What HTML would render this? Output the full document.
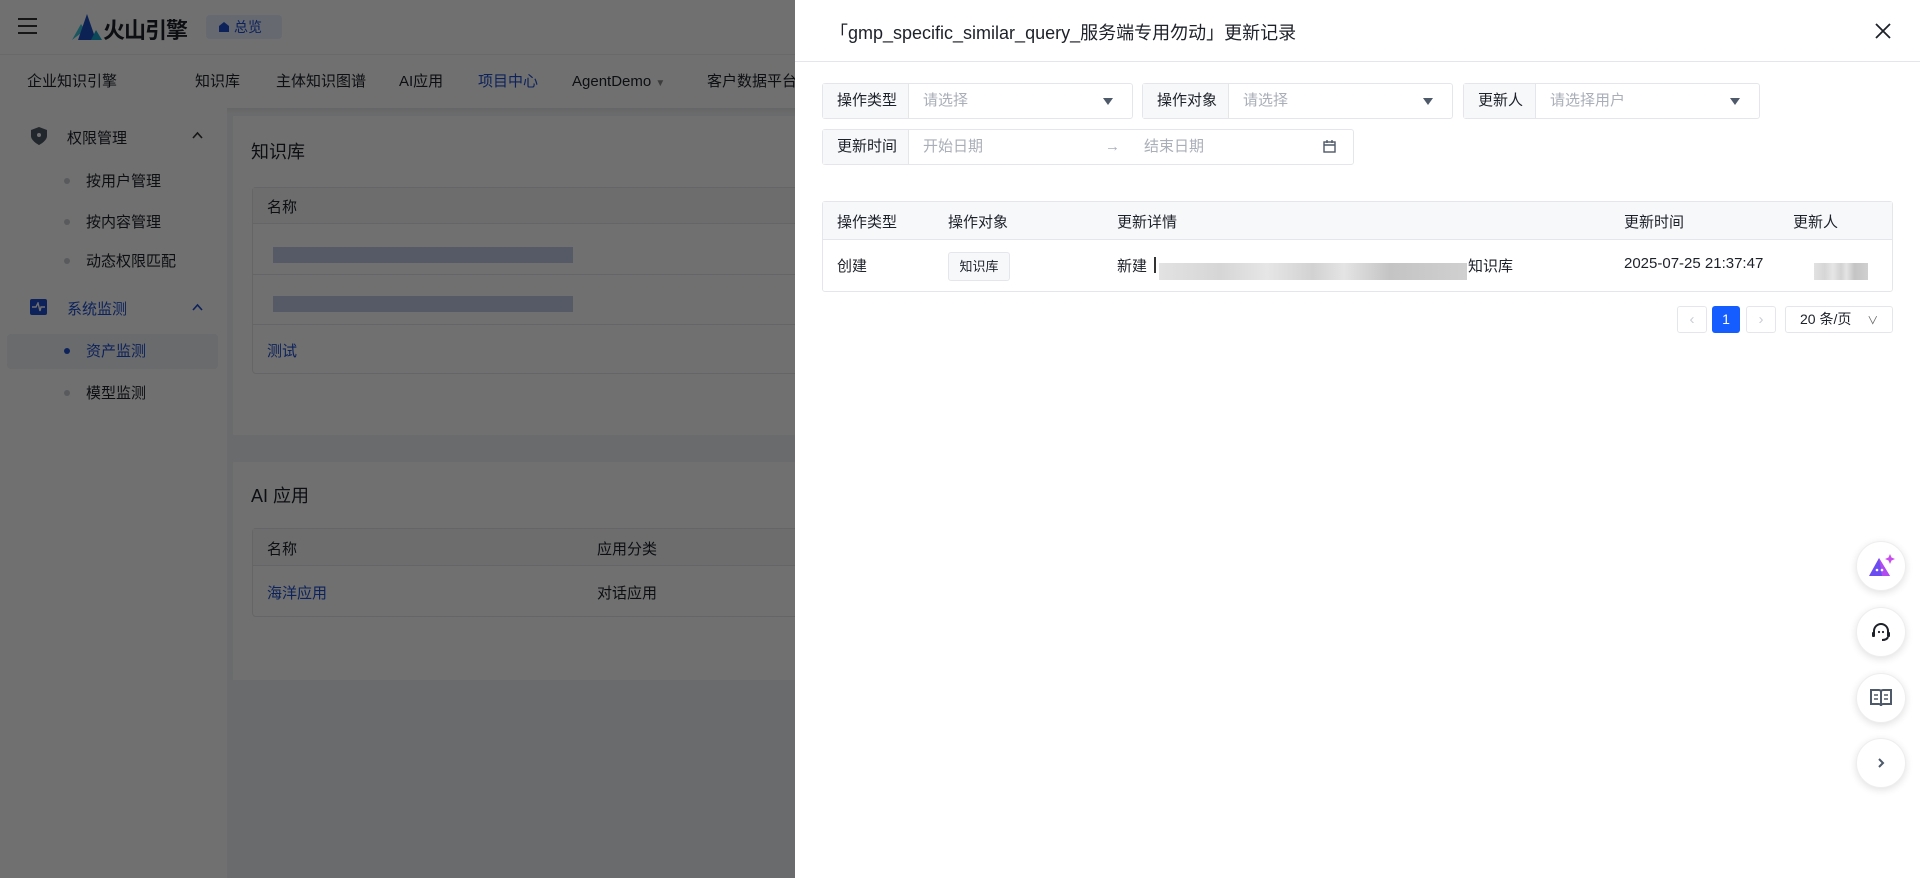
<!DOCTYPE html>
<html><head><meta charset="utf-8"><style>
*{margin:0;padding:0;box-sizing:border-box}
body{width:1920px;height:878px;overflow:hidden;font-family:"Liberation Sans","Noto Sans CJK SC",sans-serif;font-size:15px;color:#1d2129;position:relative;background:#f2f3f5}
.abs{position:absolute}
.top{left:0;top:0;width:1920px;height:54px;background:#fff}
.nav{left:0;top:54px;width:1920px;height:54px;background:#fff;border-top:1px solid #eee;box-shadow:0 2px 4px rgba(0,0,0,.06)}
.nav span{position:absolute;top:17px;font-size:15px;color:#1d2129;line-height:20px}
.side{left:0;top:108px;width:227px;height:770px;background:#fff}
.side div{position:absolute;font-size:15px}
.dot{width:6px;height:6px;border-radius:3px;background:#c9cdd4}
.card{background:#fff;position:absolute}
.tbl{position:absolute;border:1px solid #e5e6eb;border-radius:4px}
.mask{left:0;top:0;width:1920px;height:878px;background:rgba(0,0,0,.56)}
.drawer{left:795px;top:0;width:1125px;height:878px;background:#fff}
.sel{position:absolute;height:36px;border:1px solid #e5e6eb;border-radius:3px;background:#fff;font-size:15px}
.sel .lb{position:absolute;left:0;top:0;height:34px;background:#f7f8fa;border-right:1px solid #e5e6eb;line-height:34px;padding-left:14px;color:#1d2129}
.sel .ph{position:absolute;top:0;line-height:34px;color:#a9aeb8}
.sel .ar{position:absolute;top:14px;width:0;height:0;border-left:5px solid transparent;border-right:5px solid transparent;border-top:7px solid #4e5969}
.fb{position:absolute;width:50px;height:50px;border-radius:25px;background:#fff;box-shadow:0 2px 8px rgba(0,0,0,.12);border:1px solid #eee;display:flex;align-items:center;justify-content:center}
.blur{position:absolute;background:linear-gradient(90deg,#e2e2e2,#d6d6d6 20%,#e6e6e6 35%,#d2d2d2 50%,#e4e4e4 60%,#c4c4c4 75%,#d0d0d0 100%)}
</style></head><body>
<div class="abs top">
 <div class="abs" style="left:18px;top:18px;width:19px;height:2px;background:#333;box-shadow:0 7px 0 #333,0 14px 0 #333"></div>
 <svg class="abs" style="left:72px;top:14px" width="30" height="26" viewBox="0 0 30 26"><path d="M0 26 L9 10 L13 16 Z" fill="#3bc3d8"/><path d="M6 26 L15 0 L24 26 Z" fill="#1e4fc0"/><path d="M19 26 L24 16 L30 26Z" fill="#17a3c8"/></svg>
 <div class="abs" style="left:103px;top:13px;font-size:22px;font-weight:bold;color:#1d2129;letter-spacing:-1px">火山引擎</div>
 <div class="abs" style="left:206px;top:15px;width:76px;height:24px;background:#e8effe;border-radius:4px;color:#1e4fd0;font-size:14px;line-height:24px;padding-left:28px">总览</div>
 <svg class="abs" style="left:218px;top:21px" width="12" height="12" viewBox="0 0 12 12"><path d="M1 5 L6 1 L11 5 V11 H1Z" fill="#1e4fd0"/></svg>
</div>
<div class="abs nav">
 <span style="left:27px">企业知识引擎</span><span style="left:195px">知识库</span><span style="left:276px">主体知识图谱</span><span style="left:399px">AI应用</span><span style="left:478px;color:#1e4fd0">项目中心</span><span style="left:572px">AgentDemo <small style="font-size:10px;color:#888">▼</small></span><span style="left:707px">客户数据平台</span>
</div>
<div class="abs side">
 <svg style="position:absolute;left:31px;top:19px" width="16" height="18" viewBox="0 0 16 18"><path d="M8 0 L16 3 V9 C16 14 8 18 8 18 C8 18 0 14 0 9 V3Z" fill="#4e5969"/><circle cx="8" cy="8" r="2" fill="#fff"/></svg>
 <div style="left:67px;top:19px">权限管理</div>
 <svg style="position:absolute;left:192px;top:23px" width="11" height="8" viewBox="0 0 11 8"><path d="M1 7 L5.5 2 L10 7" fill="none" stroke="#333" stroke-width="1.6"/></svg>
 <div class="dot" style="left:64px;top:70px"></div><div style="left:86px;top:62px">按用户管理</div>
 <div class="dot" style="left:64px;top:111px"></div><div style="left:86px;top:103px">按内容管理</div>
 <div class="dot" style="left:64px;top:150px"></div><div style="left:86px;top:142px">动态权限匹配</div>
 <div style="left:30px;top:191px;width:17px;height:16px;background:#1e4fd0;border-radius:2px"></div>
 <svg style="position:absolute;left:32px;top:194px" width="13" height="10" viewBox="0 0 13 10"><path d="M0 5 H4 L6 1 L8 9 L9 5 H13" fill="none" stroke="#fff" stroke-width="1.4"/></svg>
 <div style="left:67px;top:190px;color:#1e4fd0">系统监测</div>
 <svg style="position:absolute;left:192px;top:195px" width="11" height="8" viewBox="0 0 11 8"><path d="M1 7 L5.5 2 L10 7" fill="none" stroke="#1e4fd0" stroke-width="1.6"/></svg>
 <div style="left:7px;top:226px;width:211px;height:35px;background:#f2f3f5;border-radius:4px"></div>
 <div class="dot" style="left:64px;top:240px;background:#1e4fd0"></div><div style="left:86px;top:232px;color:#1e4fd0">资产监测</div>
 <div class="dot" style="left:64px;top:282px"></div><div style="left:86px;top:274px">模型监测</div>
</div>
<div class="card" style="left:233px;top:116px;width:600px;height:319px">
 <div class="abs" style="left:18px;top:22px;font-size:18px">知识库</div>
 <div class="tbl" style="left:19px;top:71px;width:600px;height:187px">
  <div class="abs" style="left:0;top:0;width:600px;height:36px;background:#f7f8fa;border-bottom:1px solid #e5e6eb"></div>
  <div class="abs" style="left:14px;top:8px">名称</div>
  <div class="abs" style="left:0;top:86px;width:600px;border-top:1px solid #e5e6eb"></div>
  <div class="abs" style="left:0;top:136px;width:600px;border-top:1px solid #e5e6eb"></div>
  <div class="abs" style="left:20px;top:59px;width:300px;height:16px;background:#c5cde8"></div>
  <div class="abs" style="left:20px;top:108px;width:300px;height:16px;background:#c5cde8"></div>
  <div class="abs" style="left:14px;top:152px;color:#1e4fd0">测试</div>
 </div>
</div>
<div class="card" style="left:233px;top:462px;width:600px;height:218px">
 <div class="abs" style="left:18px;top:20px;font-size:18px">AI 应用</div>
 <div class="tbl" style="left:19px;top:66px;width:600px;height:89px">
  <div class="abs" style="left:0;top:0;width:600px;height:37px;background:#f7f8fa;border-bottom:1px solid #e5e6eb"></div>
  <div class="abs" style="left:14px;top:9px">名称</div><div class="abs" style="left:344px;top:9px">应用分类</div>
  <div class="abs" style="left:14px;top:53px;color:#1e4fd0">海洋应用</div><div class="abs" style="left:344px;top:53px">对话应用</div>
 </div>
</div>
<div class="abs mask"></div>
<div class="abs drawer">
 <div class="abs" style="left:35px;top:19px;font-size:18px;color:#1d2129">「gmp_specific_similar_query_服务端专用勿动」更新记录</div>
 <svg class="abs" style="left:1080px;top:23px" width="16" height="16" viewBox="0 0 16 16"><path d="M1 1L15 15M15 1L1 15" stroke="#1d2129" stroke-width="1.8"/></svg>
 <div class="abs" style="left:0;top:61px;width:1125px;border-top:1px solid #e5e6eb"></div>
 <div class="sel" style="left:27px;top:83px;width:311px"><div class="lb" style="width:86px">操作类型</div><div class="ph" style="left:100px">请选择</div><div class="ar" style="left:280px"></div></div>
 <div class="sel" style="left:347px;top:83px;width:311px"><div class="lb" style="width:86px">操作对象</div><div class="ph" style="left:100px">请选择</div><div class="ar" style="left:280px"></div></div>
 <div class="sel" style="left:668px;top:83px;width:297px"><div class="lb" style="width:72px">更新人</div><div class="ph" style="left:86px">请选择用户</div><div class="ar" style="left:266px"></div></div>
 <div class="sel" style="left:27px;top:129px;width:532px"><div class="lb" style="width:86px">更新时间</div><div class="ph" style="left:100px">开始日期</div><div class="ph" style="left:282px">→</div><div class="ph" style="left:321px">结束日期</div>
  <svg style="position:absolute;left:500px;top:10px" width="13" height="13" viewBox="0 0 13 13"><rect x="1" y="2" width="11" height="10" fill="none" stroke="#4e5969" stroke-width="1.4"/><path d="M1 5H12M4 0V3M9 0V3" stroke="#4e5969" stroke-width="1.4"/></svg></div>
 <div class="abs" style="left:27px;top:201px;width:1071px;height:91px;border:1px solid #e5e6eb;border-radius:3px">
  <div class="abs" style="left:0;top:0;width:1069px;height:38px;background:#f7f8fa;border-bottom:1px solid #e5e6eb"></div>
  <div class="abs" style="left:14px;top:9px">操作类型</div><div class="abs" style="left:125px;top:9px">操作对象</div><div class="abs" style="left:294px;top:9px">更新详情</div><div class="abs" style="left:801px;top:9px">更新时间</div><div class="abs" style="left:970px;top:9px">更新人</div>
  <div class="abs" style="left:14px;top:53px">创建</div>
  <div class="abs" style="left:125px;top:50px;width:62px;height:29px;border:1px solid #e5e6eb;background:#f7f8fa;border-radius:3px;font-size:13px;line-height:27px;text-align:center">知识库</div>
  <div class="abs" style="left:294px;top:53px">新建</div>
  <div class="abs" style="left:331px;top:55px;width:2px;height:16px;background:#333"></div>
  <div class="blur" style="left:336px;top:61px;width:308px;height:17px"></div>
  <div class="abs" style="left:645px;top:53px">知识库</div>
  <div class="abs" style="left:801px;top:53px">2025-07-25 21:37:47</div>
  <div class="blur" style="left:991px;top:61px;width:54px;height:17px"></div>
 </div>
 <div class="abs" style="left:882px;top:306px;width:30px;height:27px;border:1px solid #e5e6eb;border-radius:3px;color:#c9cdd4;text-align:center;line-height:25px">‹</div>
 <div class="abs" style="left:917px;top:306px;width:28px;height:27px;background:#165dff;border-radius:3px;color:#fff;text-align:center;line-height:27px;font-size:14px">1</div>
 <div class="abs" style="left:951px;top:306px;width:30px;height:27px;border:1px solid #e5e6eb;border-radius:3px;color:#c9cdd4;text-align:center;line-height:25px">›</div>
 <div class="abs" style="left:990px;top:306px;width:108px;height:27px;border:1px solid #e5e6eb;border-radius:3px;font-size:14px;line-height:25px;padding-left:14px">20 条/页 <span style="margin-left:12px;color:#666;font-size:11px">∨</span></div>
 <div class="fb" style="left:1061px;top:541px"><svg width="30" height="28" viewBox="0 0 30 28"><path d="M3 24 L13 6 L24 24Z" fill="#6a4cf0"/><path d="M13 6 L24 24 H16Z" fill="#b14bf0"/><circle cx="11" cy="18" r="1.3" fill="#fff"/><circle cx="16" cy="18" r="1.3" fill="#fff"/><path d="M24 2 L25.5 5.5 L29 7 L25.5 8.5 L24 12 L22.5 8.5 L19 7 L22.5 5.5Z" fill="#c94cf0"/></svg></div>
 <div class="fb" style="left:1061px;top:607px"><svg width="22" height="22" viewBox="0 0 22 22"><path d="M4 13 V10 A7 7 0 0 1 18 10 V13" fill="none" stroke="#1d2129" stroke-width="2"/><rect x="2" y="11" width="3" height="5" rx="1" fill="#1d2129"/><rect x="17" y="11" width="3" height="5" rx="1" fill="#1d2129"/><path d="M18 16 Q17 19 12 19" fill="none" stroke="#1d2129" stroke-width="2"/><circle cx="9" cy="11" r="1.1" fill="#1d2129"/><circle cx="13" cy="11" r="1.1" fill="#1d2129"/></svg></div>
 <div class="fb" style="left:1061px;top:673px"><svg width="24" height="22" viewBox="0 0 24 22"><path d="M2 3 H10 Q12 3 12 5 V19 Q12 17 10 17 H2Z M22 3 H14 Q12 3 12 5 V19 Q12 17 14 17 H22Z" fill="none" stroke="#4e5969" stroke-width="2"/><path d="M5 8H9M5 12H9M15 8H19M15 12H19" stroke="#4e5969" stroke-width="1.6"/></svg></div>
 <div class="fb" style="left:1061px;top:738px"><svg width="12" height="12" viewBox="0 0 12 12"><path d="M4 2 L8 6 L4 10" fill="none" stroke="#4e5969" stroke-width="2"/></svg></div>
</div>
</body></html>
